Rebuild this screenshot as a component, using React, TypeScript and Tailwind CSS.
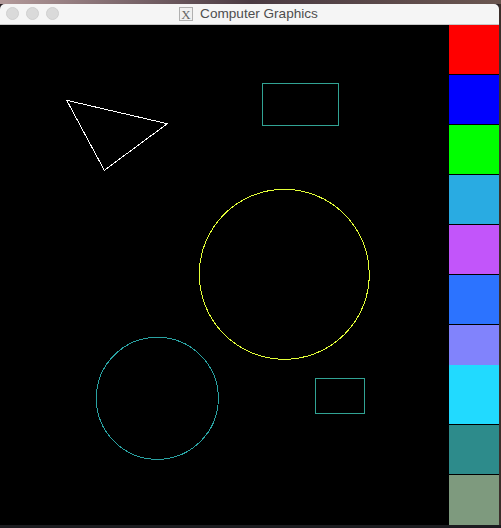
import React from "react";

const swatches: { c: string; h: string; b: boolean }[] = [
  { c: "bg-[#ff0000]", h: "h-[50px]", b: true },
  { c: "bg-[#0000ff]", h: "h-[50px]", b: true },
  { c: "bg-[#00ff00]", h: "h-[50px]", b: true },
  { c: "bg-[#29abe2]", h: "h-[50px]", b: true },
  { c: "bg-[#c255fa]", h: "h-[50px]", b: true },
  { c: "bg-[#2c73ff]", h: "h-[50px]", b: true },
  { c: "bg-[#8183fc]", h: "h-[40px]", b: false },
  { c: "bg-[#21daff]", h: "h-[60px]", b: true },
  { c: "bg-[#2d8b8b]", h: "h-[50px]", b: true },
  { c: "bg-[#7e9a7e]", h: "h-[50px]", b: false },
];

export default function App() {
  return (
    <div className="w-[501px] h-[528px] bg-[#2a2226] flex flex-col overflow-hidden" style={{ fontFamily: '"Liberation Sans", Arial, sans-serif' }}>
      <div className="h-[4px] shrink-0 bg-gradient-to-r from-[#b49a9a] via-[#4a3a42] to-[#6a5650]" />
      <div className="flex flex-row">
        <div className="w-[499px] flex flex-col rounded-t-[5px] overflow-hidden">
          <div className="h-[21px] bg-[#f5f5f5] border-b border-[#c8c8c8] relative flex items-center justify-center">
            <div className="absolute left-[6px] top-[3px] flex gap-[7px]">
              <div className="w-[13px] h-[13px] rounded-full bg-[#dadada] border border-[#cfcfcf]" />
              <div className="w-[13px] h-[13px] rounded-full bg-[#dadada] border border-[#cfcfcf]" />
              <div className="w-[13px] h-[13px] rounded-full bg-[#dadada] border border-[#cfcfcf]" />
            </div>
            <div className="flex items-center gap-[7px] mr-[2px]">
              <div className="w-[14px] h-[14px] border border-[#b0b0b0] bg-[#f0f0f0] flex items-center justify-center text-[13px] leading-none text-[#666]" style={{ fontFamily: '"Liberation Serif", serif' }}>
                X
              </div>
              <span className="text-[13.6px] text-[#4d4d4d] leading-none">Computer Graphics</span>
            </div>
          </div>
          <div className="flex flex-row h-[500px]">
            <div className="w-[449px] h-[500px] bg-black">
              <svg width="449" height="500" shapeRendering="crispEdges">
                <polygon points="66.7,75.3 167.3,98.7 104.3,145.3" fill="none" stroke="#ffffff" strokeWidth="1" />
                <rect x="262.5" y="58.5" width="76" height="42" fill="none" stroke="#31a394" strokeWidth="1" />
                <rect x="315.5" y="353.5" width="49" height="35" fill="none" stroke="#31a394" strokeWidth="1" />
                <circle cx="284.3" cy="249.3" r="85" fill="none" stroke="#e4ff38" strokeWidth="1" />
                <circle cx="157.3" cy="373.3" r="61" fill="none" stroke="#2aa3a3" strokeWidth="1" />
              </svg>
            </div>
            <div className="w-[50px] flex flex-col bg-black">
              {swatches.map((s, i) => (
                <div key={i} className={`${s.h} ${s.c} ${s.b ? "border-b border-black" : ""}`} />
              ))}
            </div>
          </div>
        </div>
        <div className="w-[2px] bg-[#3a2e2a]" />
      </div>
      <div className="flex-1 bg-[#1c1c20]" />
    </div>
  );
}
